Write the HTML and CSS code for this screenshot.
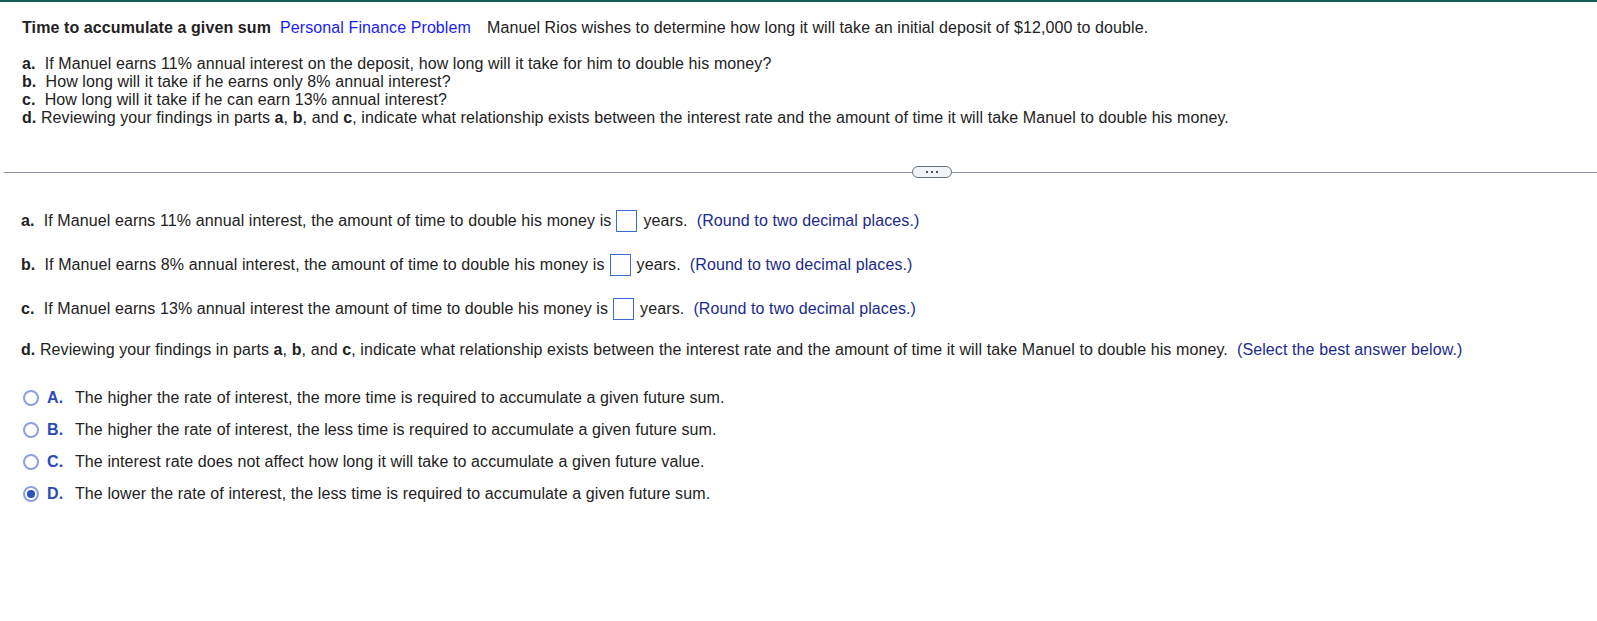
FILE: index.html
```html
<!DOCTYPE html>
<html>
<head>
<meta charset="utf-8">
<link rel="stylesheet" href="styles.css">
</head>
<body>
<div class="topbar"></div>
<div class="problem">
  <p class="title"><b>Time to accumulate a given sum</b><span class="tag">Personal Finance Problem</span><span class="intro">Manuel Rios wishes to determine how long it will take an initial deposit of $12,000 to double.</span></p>
  <div class="parts">
    <div><b>a.</b>&nbsp; If Manuel earns 11% annual interest on the deposit, how long will it take for him to double his money?</div>
    <div><b>b.</b>&nbsp; How long will it take if he earns only 8% annual interest?</div>
    <div><b>c.</b>&nbsp; How long will it take if he can earn 13% annual interest?</div>
    <div><b>d.</b> Reviewing your findings in parts <b>a</b>, <b>b</b>, and <b>c</b>, indicate what relationship exists between the interest rate and the amount of time it will take Manuel to double his money.</div>
  </div>
</div>
<div class="divider">
  <div class="rule rule-left"></div>
  <div class="pill"><span></span><span></span><span></span></div>
  <div class="rule"></div>
</div>
<div class="answers">
  <div class="q q-a"><span><b>a.</b>&nbsp; If Manuel earns 11% annual interest, the amount of time to double his money is</span><span class="box"></span><span>years.&nbsp; <span class="hint">(Round to two decimal places.)</span></span></div>
  <div class="q q-b"><span><b>b.</b>&nbsp; If Manuel earns 8% annual interest, the amount of time to double his money is</span><span class="box"></span><span>years.&nbsp; <span class="hint">(Round to two decimal places.)</span></span></div>
  <div class="q q-c"><span><b>c.</b>&nbsp; If Manuel earns 13% annual interest the amount of time to double his money is</span><span class="box"></span><span>years.&nbsp; <span class="hint">(Round to two decimal places.)</span></span></div>
  <div class="q q-d"><span><b>d.</b> Reviewing your findings in parts <b>a</b>, <b>b</b>, and <b>c</b>, indicate what relationship exists between the interest rate and the amount of time it will take Manuel to double his money.&nbsp; <span class="hint">(Select the best answer below.)</span></span></div>
  <div class="choices">
    <div class="choice"><span class="radio"></span><span class="letter">A.</span><span>The higher the rate of interest, the more time is required to accumulate a given future sum.</span></div>
    <div class="choice"><span class="radio"></span><span class="letter">B.</span><span>The higher the rate of interest, the less time is required to accumulate a given future sum.</span></div>
    <div class="choice"><span class="radio"></span><span class="letter">C.</span><span>The interest rate does not affect how long it will take to accumulate a given future value.</span></div>
    <div class="choice"><span class="radio checked"></span><span class="letter">D.</span><span>The lower the rate of interest, the less time is required to accumulate a given future sum.</span></div>
  </div>
</div>
</body>
</html>
```

FILE: styles.css
```css
html, body {
  margin: 0;
  padding: 0;
  background: #fff;
}
body {
  font-family: "Liberation Sans", Arial, sans-serif;
  font-size: 16px;
  letter-spacing: 0.1px;
  color: #222;
  line-height: 18px;
}
.topbar {
  height: 2px;
  background: #13605a;
}
.problem {
  padding: 17px 0 0 22px;
}
.title {
  margin: 0;
}
.tag {
  color: #1a1aff;
  margin-left: 9px;
}
.intro {
  margin-left: 16px;
}
.parts {
  margin-top: 18px;
}
.divider {
  display: flex;
  align-items: center;
  margin: 38px 0 0 4px;
  height: 14px;
}
.rule {
  flex: 1;
  height: 1px;
  background: #8a92a2;
}
.rule.rule-left {
  flex: 0 0 908px;
}
.pill {
  width: 38px;
  height: 10px;
  border: 1px solid #66707f;
  border-radius: 6px;
  background: #f1f3f7;
  display: flex;
  align-items: center;
  justify-content: center;
  gap: 3px;
}
.pill span {
  width: 2px;
  height: 2px;
  background: #4a5260;
}
.answers {
  padding: 0 0 0 21px;
}
.q {
  height: 22px;
  display: flex;
  align-items: center;
  white-space: nowrap;
}
.q-a { margin-top: 31px; }
.q-b { margin-top: 22px; }
.q-c { margin-top: 22px; }
.q-d { margin-top: 19px; }
.box {
  display: inline-block;
  width: 19px;
  height: 20px;
  border: 1px solid #3b6bd0;
  margin: 0 6px 0 5px;
}
.hint {
  color: #1c2a8c;
}
.choices {
  margin-top: 21px;
}
.choice {
  height: 32px;
  display: flex;
  align-items: center;
}
.radio {
  width: 16px;
  height: 16px;
  border: 2px solid #8d9fe2;
  border-radius: 50%;
  margin: 0 8px 0 2px;
  box-sizing: border-box;
  display: flex;
  align-items: center;
  justify-content: center;
}
.radio.checked::after {
  content: "";
  width: 8px;
  height: 8px;
  border-radius: 50%;
  background: #2b4fc4;
}
.letter {
  color: #2a4ab8;
  font-weight: bold;
  width: 28px;
}
```
